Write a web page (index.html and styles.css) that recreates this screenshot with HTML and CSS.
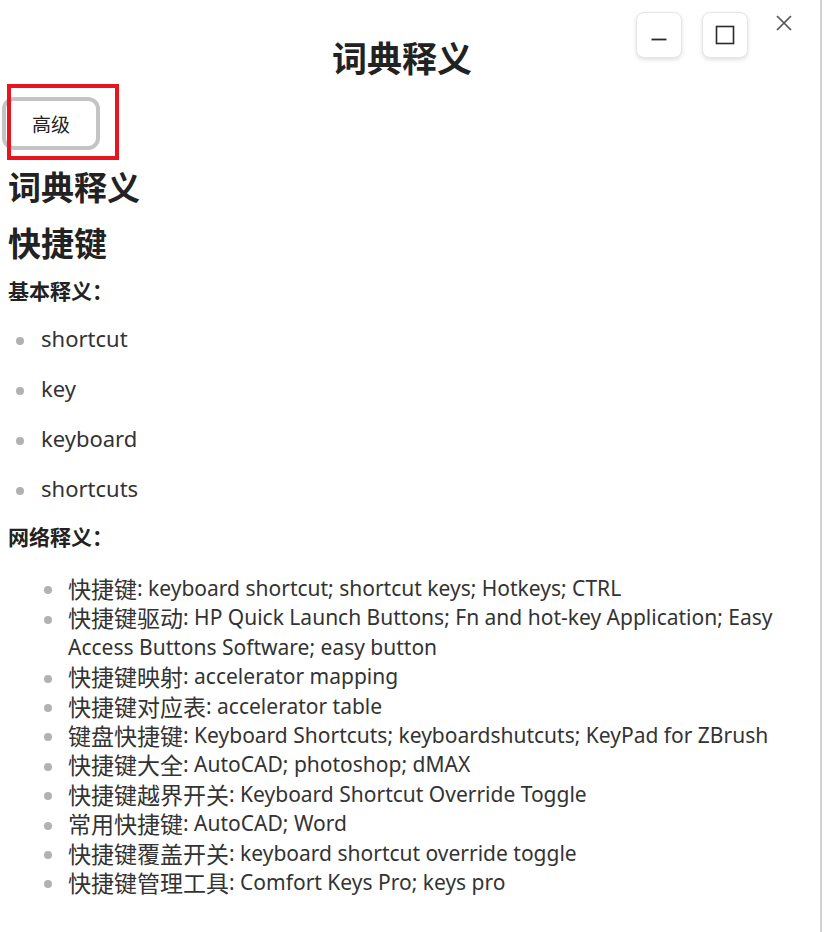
FILE: index.html
```html
<!DOCTYPE html>
<html lang="zh-CN">
<head>
<meta charset="utf-8">
<title>词典释义</title>
<link rel="stylesheet" href="styles.css">
</head>
<body>
<div class="app">
  <header class="titlebar">
    <div class="spacer"></div>
    <h1 class="title">词典释义</h1>
    <div class="controls">
      <button class="win-btn" aria-label="最小化">
        <svg width="16" height="16" viewBox="0 0 16 16"><path d="M0.5 12.5h15" stroke="#2a2a2a" stroke-width="1.8" fill="none"/></svg>
      </button>
      <button class="win-btn" aria-label="最大化">
        <svg width="20" height="20" viewBox="0 0 20 20"><rect x="1.5" y="1.5" width="17" height="17" stroke="#2a2a2a" stroke-width="1.6" fill="none"/></svg>
      </button>
      <button class="close-btn" aria-label="关闭">
        <svg width="16" height="16" viewBox="0 0 16 16"><path d="M1 1L15 15M15 1L1 15" stroke="#555" stroke-width="1.7" fill="none"/></svg>
      </button>
    </div>
  </header>

  <div class="toolbar">
    <button class="adv-btn">高级</button>
    <span class="highlight"></span>
  </div>

  <main class="content">
    <h2 class="section-title">词典释义</h2>
    <h2 class="word">快捷键</h2>
    <h3 class="label">基本释义：</h3>
    <ul class="basic-list">
      <li>shortcut</li>
      <li>key</li>
      <li>keyboard</li>
      <li>shortcuts</li>
    </ul>
    <h3 class="label label-web">网络释义：</h3>
    <ul class="web-list">
      <li><span class="term">快捷键</span>: keyboard shortcut; shortcut keys; Hotkeys; CTRL</li>
      <li><span class="term">快捷键驱动</span>: HP Quick Launch Buttons; Fn and hot-key Application; Easy Access Buttons Software; easy button</li>
      <li><span class="term">快捷键映射</span>: accelerator mapping</li>
      <li><span class="term">快捷键对应表</span>: accelerator table</li>
      <li><span class="term">键盘快捷键</span>: Keyboard Shortcuts; keyboardshutcuts; KeyPad for ZBrush</li>
      <li><span class="term">快捷键大全</span>: AutoCAD; photoshop; dMAX</li>
      <li><span class="term">快捷键越界开关</span>: Keyboard Shortcut Override Toggle</li>
      <li><span class="term">常用快捷键</span>: AutoCAD; Word</li>
      <li><span class="term">快捷键覆盖开关</span>: keyboard shortcut override toggle</li>
      <li><span class="term">快捷键管理工具</span>: Comfort Keys Pro; keys pro</li>
    </ul>
  </main>
</div>
</body>
</html>
```

FILE: styles.css
```css
* { box-sizing: border-box; }

html, body {
  margin: 0;
  padding: 0;
  background: #ffffff;
}

body {
  font-family: "Noto Sans", "Noto Sans CJK SC", sans-serif;
  color: #333333;
}

.app {
  width: 822px;
  min-height: 932px;
  border-right: 2px solid #d2d2d2;
  background: #ffffff;
}

/* ---------- title bar ---------- */
.titlebar {
  display: grid;
  grid-template-columns: 1fr auto 1fr;
  align-items: start;
  padding: 12px 16px 0 0;
}

.title {
  margin: 20px 0 0;
  font-family: "Noto Sans CJK SC", sans-serif;
  font-size: 35px;
  line-height: 50px;
  font-weight: 700;
  color: #222222;
  text-align: center;
}

.controls {
  display: flex;
  justify-content: flex-end;
  align-items: flex-start;
  gap: 20px;
}

.win-btn {
  width: 46px;
  height: 46px;
  padding: 0;
  border: 1px solid #e6e6e6;
  border-radius: 8px;
  background: #ffffff;
  box-shadow: 0 2px 4px rgba(0, 0, 0, 0.12);
  display: flex;
  align-items: center;
  justify-content: center;
}

.close-btn {
  width: 32px;
  height: 22px;
  margin-right: 4px;
  padding: 0;
  border: none;
  background: transparent;
  display: flex;
  align-items: center;
  justify-content: center;
}

/* ---------- toolbar ---------- */
.toolbar {
  position: relative;
  margin-top: 15px;
  padding-left: 2px;
}

.adv-btn {
  width: 98px;
  height: 53px;
  border: 4px solid #c4c4c4;
  border-radius: 12px;
  background: #ffffff;
  font-family: "Noto Sans CJK SC", sans-serif;
  font-size: 19px;
  color: #222222;
  padding: 0;
}

.highlight {
  position: absolute;
  left: 7px;
  top: -13px;
  width: 112px;
  height: 76px;
  border: 4px solid #e8141e;
  pointer-events: none;
}

/* ---------- content ---------- */
.content {
  padding-left: 8px;
  padding-right: 16px;
}

.section-title,
.word {
  margin: 0;
  font-family: "Noto Sans CJK SC", sans-serif;
  font-size: 33px;
  line-height: 40px;
  font-weight: 700;
  color: #222222;
}

.section-title { margin-top: 16px; }
.word { margin-top: 16px; }

.label {
  margin: 13px 0 0;
  font-family: "Noto Sans CJK SC", sans-serif;
  font-size: 21px;
  line-height: 30px;
  font-weight: 700;
  color: #222222;
}

.label-web { margin-top: 8px; }

ul {
  list-style: none;
  margin: 0;
}

.basic-list {
  padding: 8px 0 0 33px;
}

.basic-list li {
  padding: 10px 0;
  font-size: 22px;
  line-height: 30px;
  color: #333333;
}

.basic-list li::before {
  content: "";
  display: inline-block;
  width: 8px;
  height: 8px;
  border-radius: 50%;
  background: #b2b2b2;
  margin-left: -25px;
  margin-right: 17px;
  vertical-align: middle;
}

.web-list {
  padding: 23px 0 0 60px;
}

.web-list li {
  font-size: 21px;
  line-height: 29.4px;
  color: #333333;
}

.web-list li::before {
  content: "";
  display: inline-block;
  width: 8px;
  height: 8px;
  border-radius: 50%;
  background: #b2b2b2;
  margin-left: -24px;
  margin-right: 16px;
  vertical-align: middle;
}

.term {
  font-family: "Noto Sans CJK SC", sans-serif;
  font-size: 23px;
  line-height: 29.4px;
  vertical-align: top;
}
```
